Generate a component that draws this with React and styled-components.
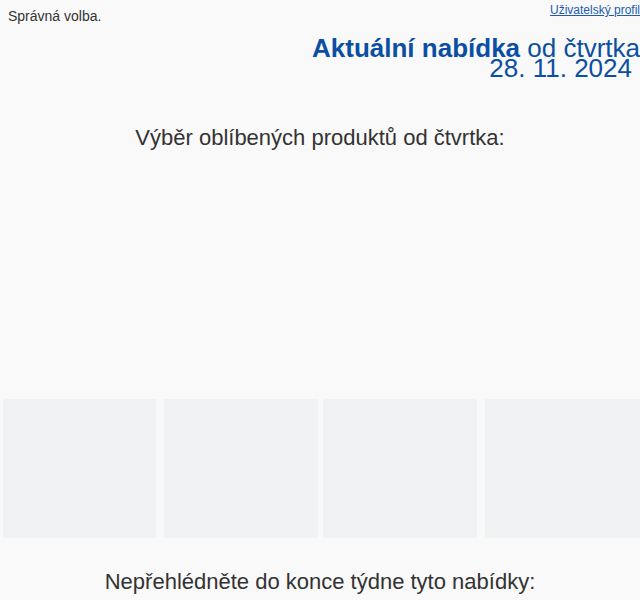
import * as React from 'react';
import styled, { createGlobalStyle } from 'styled-components';

const GlobalStyle = createGlobalStyle`
  html, body {
    margin: 0;
    padding: 0;
    background: #f9f9f9;
    font-family: "Liberation Sans", Arial, sans-serif;
    overflow: hidden;
  }
`;

const Page = styled.div`
  width: 640px;
  min-height: 600px;
  background: #f9f9f9;
`;

const TopBar = styled.div`
  display: flex;
  justify-content: space-between;
  align-items: flex-start;
  padding: 3px 0 0 8px;
`;

const Tagline = styled.span`
  font-size: 14px;
  color: #333;
  margin-top: 5px;
`;

const ProfileLink = styled.a`
  font-size: 12px;
  color: #1c5bb0;
  text-decoration: underline;
`;

const Headline = styled.div`
  text-align: right;
  color: #0b4fa3;
  font-size: 26px;
  line-height: 20px;
  margin-top: 14px;
`;

const Strong = styled.b`
  font-weight: 700;
`;

const Date = styled.div`
  padding-right: 8px;
`;

const SectionTitle = styled.h2`
  margin: 0;
  font-weight: 400;
  font-size: 22px;
  color: #333;
  text-align: center;
  padding-top: ${p => p.$top}px;
`;

const Track = styled.div`
  display: flex;
  padding-left: 3px;
  margin-top: 248px;
`;

const Tile = styled.div`
  flex: 0 0 ${p => p.$w}px;
  margin-left: ${p => p.$gap || 0}px;
  height: 139px;
  background: #f1f2f4;
`;

export default function App() {
  return (
    <Page>
      <GlobalStyle />
      <TopBar>
        <Tagline>Správná volba.</Tagline>
        <ProfileLink href="#">Uživatelský profil</ProfileLink>
      </TopBar>
      <Headline>
        <div><Strong>Aktuální nabídka</Strong> od čtvrtka</div>
        <Date>28. 11. 2024</Date>
      </Headline>
      <SectionTitle $top={47}>Výběr oblíbených produktů od čtvrtka:</SectionTitle>
      <Track>
        <Tile $w={153} />
        <Tile $w={154} $gap={8} />
        <Tile $w={154} $gap={5} />
        <Tile $w={160} $gap={8} />
      </Track>
      <SectionTitle $top={31}>Nepřehlédněte do konce týdne tyto nabídky:</SectionTitle>
    </Page>
  );
}
